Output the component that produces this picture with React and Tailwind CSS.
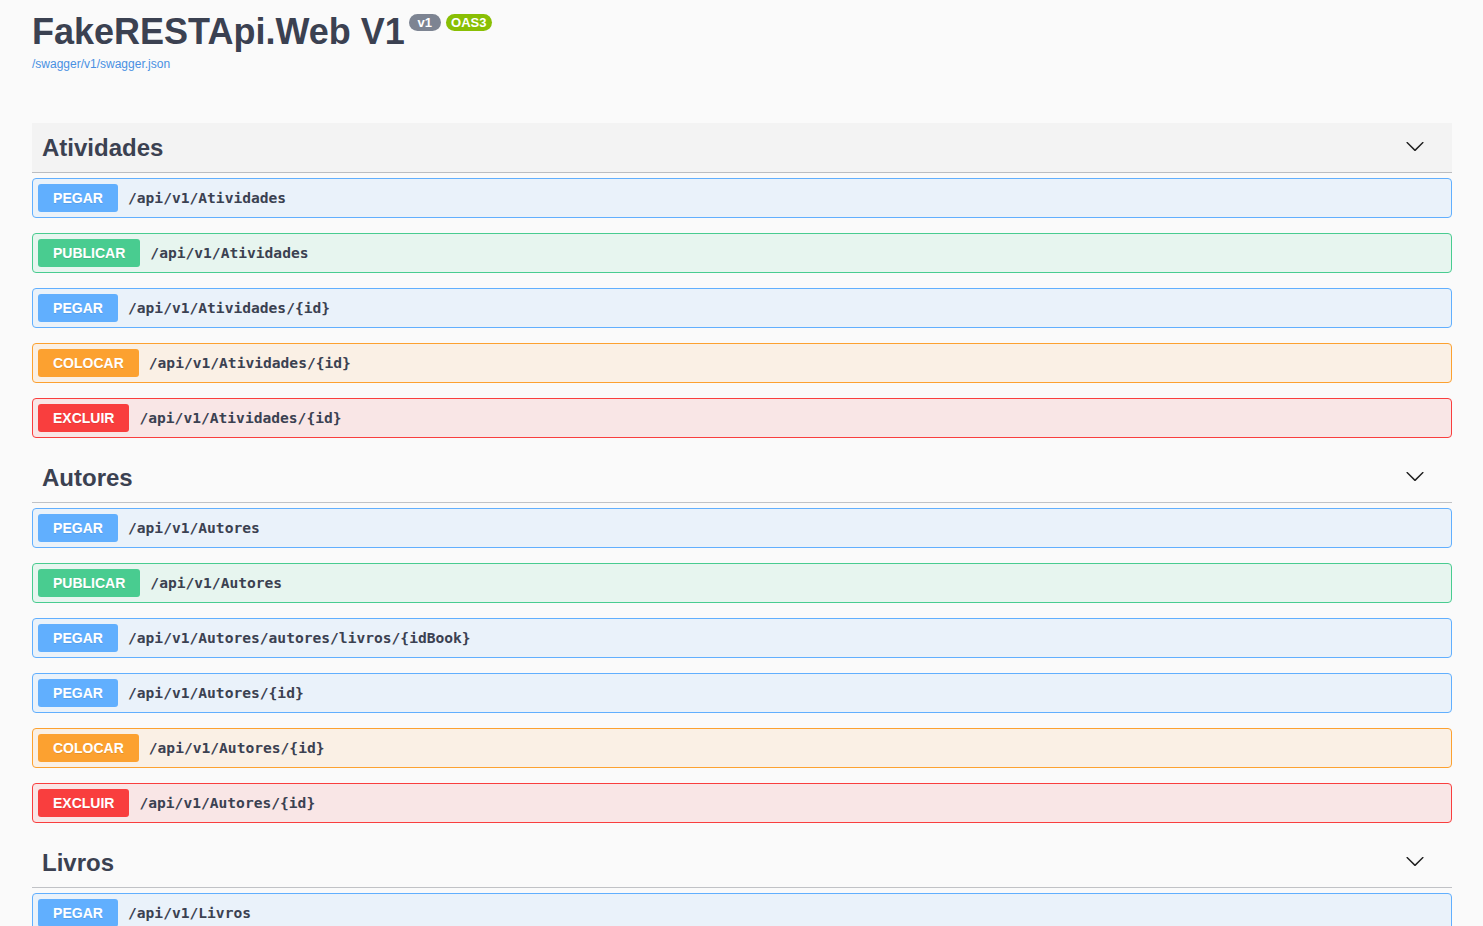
import React from "react";

const METHODS = {
  get: { label: "PEGAR", badge: "bg-[#61affe]", box: "border-[#61affe] bg-[#61affe]/10" },
  post: { label: "PUBLICAR", badge: "bg-[#49cc90]", box: "border-[#49cc90] bg-[#49cc90]/10" },
  put: { label: "COLOCAR", badge: "bg-[#fca130]", box: "border-[#fca130] bg-[#fca130]/10" },
  delete: { label: "EXCLUIR", badge: "bg-[#f93e3e]", box: "border-[#f93e3e] bg-[#f93e3e]/10" },
};

const sections = [
  {
    name: "Atividades",
    hover: true,
    ops: [
      ["get", "/api/v1/Atividades"],
      ["post", "/api/v1/Atividades"],
      ["get", "/api/v1/Atividades/{id}"],
      ["put", "/api/v1/Atividades/{id}"],
      ["delete", "/api/v1/Atividades/{id}"],
    ],
  },
  {
    name: "Autores",
    ops: [
      ["get", "/api/v1/Autores"],
      ["post", "/api/v1/Autores"],
      ["get", "/api/v1/Autores/autores/livros/{idBook}"],
      ["get", "/api/v1/Autores/{id}"],
      ["put", "/api/v1/Autores/{id}"],
      ["delete", "/api/v1/Autores/{id}"],
    ],
  },
  {
    name: "Livros",
    ops: [["get", "/api/v1/Livros"]],
  },
];

const Chevron = () => (
  <svg width="20" height="20" viewBox="0 0 20 20" className="mb-[4px] fill-[#1f1f1f]">
    <path d="M17.418 6.109c.272-.268.709-.268.979 0s.271.701 0 .969l-7.908 7.83c-.27.268-.707.268-.979 0l-7.908-7.83c-.27-.268-.27-.701 0-.969.271-.268.709-.268.979 0L10 13.25l7.418-7.141z" />
  </svg>
);

const Operation = ({ method, path }) => {
  const m = METHODS[method];
  return (
    <div className={`mb-[15px] flex h-[40px] items-center rounded-[4px] border px-[5px] ${m.box}`}>
      <span
        className={`flex h-[28px] min-w-[80px] items-center justify-center rounded-[3px] px-[15px] text-[14px] font-bold text-white [text-shadow:0_1px_0_rgba(0,0,0,0.1)] ${m.badge}`}
      >
        {m.label}
      </span>
      <span className="ml-[10px] font-['DejaVu_Sans_Mono',monospace] text-[14.6px] font-bold text-[#3b4151]">
        {path}
      </span>
    </div>
  );
};

export default function App() {
  return (
    <div className="min-h-screen bg-[#fafafa] font-['Liberation_Sans',Arial,sans-serif] text-[#3b4151]">
      <div className="ml-[32px] w-[1420px]">
        {/* info */}
        <div className="flex items-start pt-[11px]">
          <h2 className="text-[36px] font-bold leading-[41px]">FakeRESTApi.Web V1</h2>
          <span className="ml-[4px] mt-[3px] flex h-[17px] w-[32px] items-center justify-center rounded-full bg-[#7d8492] text-[13px] font-bold text-white">
            v1
          </span>
          <span className="ml-[5px] mt-[3px] flex h-[17px] w-[46px] items-center justify-center rounded-full bg-[#89bf04] text-[13px] font-bold text-white">
            OAS3
          </span>
        </div>
        <a className="mt-[5px] block text-[12px] leading-[14px] text-[#4990e2]">/swagger/v1/swagger.json</a>

        <div className="mt-[52px]">
          {sections.map((s) => (
            <div key={s.name}>
              <div
                className={`mb-[5px] flex h-[50px] items-center justify-between border-b border-[#3b4151]/30 pl-[10px] pr-[27px] ${
                  s.hover ? "bg-[#f3f3f3]" : ""
                }`}
              >
                <h3 className="text-[24px] font-bold">{s.name}</h3>
                <Chevron />
              </div>
              {s.ops.map(([method, path], i) => (
                <Operation key={i} method={method} path={path} />
              ))}
            </div>
          ))}
        </div>
      </div>
    </div>
  );
}
